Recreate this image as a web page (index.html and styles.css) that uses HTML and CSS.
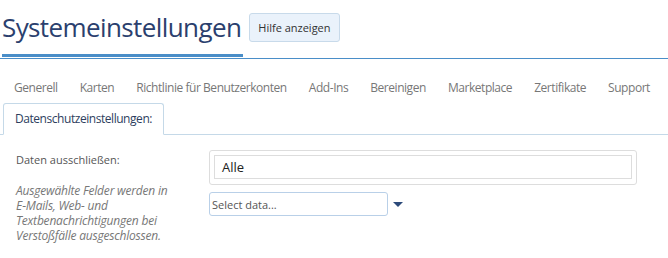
FILE: index.html
```html
<!DOCTYPE html>
<html lang="de">
<head>
    <meta charset="UTF-8">
    <title>Systemeinstellungen</title>
    <link rel="stylesheet" href="styles.css">
</head>
<body>
    <div class="page-header">
        <h1>Systemeinstellungen</h1>
        <button class="help-btn">Hilfe anzeigen</button>
    </div>

    <ul class="tabs">
        <li><a href="#">Generell</a></li>
        <li><a href="#">Karten</a></li>
        <li><a href="#">Richtlinie für Benutzerkonten</a></li>
        <li><a href="#">Add-Ins</a></li>
        <li><a href="#">Bereinigen</a></li>
        <li><a href="#">Marketplace</a></li>
        <li><a href="#">Zertifikate</a></li>
        <li><a href="#">Support</a></li>
        <li class="break"></li>
        <li class="active"><a href="#">Datenschutzeinstellungen:</a></li>
    </ul>

    <div class="form-row">
        <div class="form-label">
            <label>Daten ausschließen:</label>
            <p class="help-text">Ausgewählte Felder werden in E&#8209;Mails, Web- und Textbenachrichtigungen bei Verstoßfälle ausgeschlossen.</p>
        </div>
        <div class="form-field">
            <div class="tag-box">
                <div class="tag-inner">Alle</div>
            </div>
            <div class="select-row">
                <input type="text" class="select-input" placeholder="Select data...">
                <span class="caret"></span>
            </div>
        </div>
    </div>
</body>
</html>
```

FILE: styles.css
```css
body {
    margin: 0;
    font-family: 'Open Sans', 'Segoe UI', sans-serif;
    background: #fff;
    color: #555;
}
.page-header {
    display: flex;
    align-items: center;
    border-bottom: 1px solid #4a8ec8;
    height: 58px;
    margin-bottom: 13px;
}
.page-header h1 {
    margin: 0 6px 0 2px;
    font-size: 26px;
    letter-spacing: -0.6px;
    font-weight: normal;
    color: #2b3f6e;
    line-height: 54px;
    height: 54px;
    border-bottom: 3px solid #4a8ec8;
    padding-right: 2px;
    align-self: flex-start;
}
.help-btn {
    font-family: inherit;
    font-size: 11px;
    color: #333;
    background: #eaf2fb;
    border: 1px solid #c8daea;
    border-radius: 3px;
    height: 29px;
    padding: 0 8px;
    margin-top: -4px;
}
.tabs {
    list-style: none;
    margin: 0;
    padding: 0 0 0 3px;
    display: flex;
    flex-wrap: wrap;
    border-bottom: 1px solid #c5d9e8;
}
.tabs li {
    margin-bottom: -1px;
    white-space: nowrap;
}
.tabs li.break {
    flex-basis: 100%;
    height: 0;
    margin: 0;
}
.tabs a {
    display: block;
    padding: 0 10px;
    line-height: 30px;
    font-size: 12px;
    letter-spacing: -0.45px;
    color: #777;
    text-decoration: none;
    border: 1px solid transparent;
    border-radius: 3px 3px 0 0;
}
.tabs li.active a {
    padding: 0 11px;
    color: #2d3e5e;
    background: #fff;
    border-color: #c5d9e8;
    border-bottom-color: #fff;
}
.form-row {
    display: flex;
    padding: 15px 0 0 16px;
}
.form-label {
    flex: none;
    width: 193px;
}
.form-label label {
    display: block;
    font-size: 11px;
    color: #555;
    line-height: 20px;
}
.help-text {
    margin: 13px 0 0;
    width: 160px;
    font-size: 12px;
    letter-spacing: -0.2px;
    font-style: italic;
    line-height: 15px;
    color: #777;
}
.form-field {
    flex: 1;
    padding-right: 31px;
}
.tag-box {
    border: 1px solid #ddd;
    border-radius: 3px;
    padding: 4px 4px 5px;
}
.tag-inner {
    border: 1px solid #ddd;
    height: 22px;
    line-height: 22px;
    padding: 0 7px;
    font-size: 13px;
    color: #222;
}
.select-row {
    display: flex;
    align-items: center;
    margin-top: 7px;
}
.select-input {
    width: 179px;
    height: 24px;
    box-sizing: border-box;
    border: 1px solid #b9d0e8;
    border-radius: 3px;
    padding: 0 2px;
    font-family: inherit;
    font-size: 11px;
    color: #333;
}
.select-input::placeholder {
    color: #555;
}
.caret {
    width: 0;
    height: 0;
    margin-left: 5px;
    border-left: 5px solid transparent;
    border-right: 5px solid transparent;
    border-top: 5px solid #2c4a7a;
}
```
